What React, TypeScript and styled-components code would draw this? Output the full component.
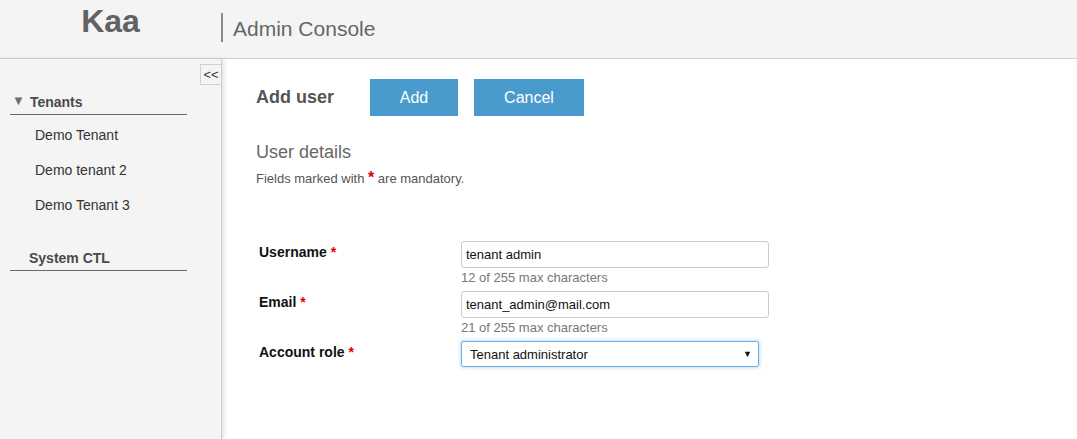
import React from "react";
import styled, { createGlobalStyle } from "styled-components";

const Global = createGlobalStyle`
  html, body { margin: 0; padding: 0; background: #fff; }
  body { font-family: "Liberation Sans", Arial, sans-serif; color: #333; }
  * { box-sizing: border-box; }
`;

const Page = styled.div`
  width: 1077px;
  height: 439px;
  display: flex;
  flex-direction: column;
  overflow: hidden;
`;

const Header = styled.header`
  height: 59px;
  background: #f4f4f4;
  border-bottom: 1px solid #d0d0d0;
  display: flex;
  align-items: center;
  flex-shrink: 0;
`;

const Logo = styled.div`
  width: 221px;
  text-align: center;
  font-size: 32px;
  font-weight: bold;
  color: #626262;
  margin-top: -16px;
`;

const Title = styled.div`
  border-left: 2px solid #8a8a8a;
  height: 29px;
  margin-top: -3px;
  padding-left: 10px;
  font-size: 21px;
  color: #666;
  display: flex;
  align-items: center;
  padding-top: 2px;
`;

const Body = styled.div`
  flex: 1;
  display: flex;
`;

const Sidebar = styled.nav`
  width: 222px;
  background: #f4f4f4;
  border-right: 1px solid #cfcfcf;
  box-shadow: 2px 0 4px rgba(0, 0, 0, 0.12);
  position: relative;
  padding: 33px 34px 0 10px;
  z-index: 1;
`;

const Collapse = styled.button`
  position: absolute;
  top: 5px;
  right: 0;
  width: 21px;
  height: 21px;
  border: 1px solid #cfcfcf;
  border-right: none;
  background: #f4f4f4;
  font-family: "Liberation Sans", Arial, sans-serif;
  font-size: 13px;
  color: #333;
  padding: 0;
  line-height: 19px;
`;

const SectionHead = styled.div<{ $indent: number }>`
  display: flex;
  align-items: center;
  gap: 5px;
  height: 20px;
  padding-left: ${(p) => p.$indent}px;
  border-bottom: 1px solid #6a6a6a;
  font-size: 14px;
  font-weight: bold;
  color: #4a4a4a;
  padding-bottom: 2px;
  box-sizing: content-box;
`;

const Arrow = styled.span`
  font-size: 13px;
  color: #6f6f6f;
  margin-top: -3px;
`;

const ItemList = styled.ul`
  list-style: none;
  margin: 0 0 25px;
  padding: 0;
`;

const Item = styled.li`
  padding-left: 25px;
  height: 35px;
  line-height: 35px;
  font-size: 14px;
  color: #333;
  &:first-child { margin-top: 3px; }
`;

const Main = styled.main`
  flex: 1;
  padding: 20px 0 0 34px;
`;

const Toolbar = styled.div`
  display: flex;
  align-items: center;
`;

const PageTitle = styled.h1`
  margin: 0 36px 0 0;
  font-size: 18px;
  font-weight: bold;
  color: #555;
`;

const Button = styled.button<{ $w: number }>`
  width: ${(p) => p.$w}px;
  height: 37px;
  background: #4a9bcd;
  border: none;
  color: #fff;
  font-family: "Liberation Sans", Arial, sans-serif;
  font-size: 16px;
  margin-right: 16px;
`;

const SubTitle = styled.h2`
  margin: 26px 0 0;
  font-size: 18px;
  font-weight: normal;
  color: #666;
`;

const Note = styled.p`
  margin: 6px 0 0;
  font-size: 13px;
  color: #555;
`;

const Star = styled.span<{ $size?: number }>`
  color: #d00;
  font-weight: bold;
  font-size: ${(p) => p.$size ?? 14}px;
`;

const Form = styled.div`
  margin-top: 54px;
  display: grid;
  grid-template-columns: 202px 308px;
  padding-left: 3px;
`;

const Label = styled.label`
  font-size: 14px;
  font-weight: bold;
  color: #111;
  padding-top: 3px;
  display: flex;
  gap: 4px;
`;

const Field = styled.div`
  display: flex;
  flex-direction: column;
  margin-bottom: 6px;
`;

const Input = styled.div`
  height: 27px;
  border: 1px solid #ccc;
  border-radius: 3px;
  padding: 0 4px;
  font-size: 13px;
  line-height: 25px;
  color: #111;
`;

const Hint = styled.div`
  font-size: 13px;
  color: #777;
  margin-top: 2px;
  line-height: 15px;
`;

const Select = styled.div`
  width: 298px;
  height: 26px;
  border: 1px solid #66afe9;
  border-radius: 2px;
  box-shadow: 0 0 4px rgba(102, 175, 233, 0.6);
  display: flex;
  align-items: center;
  justify-content: space-between;
  padding: 0 6px 0 8px;
  font-size: 13px;
  color: #111;
`;

const Caret = styled.span`
  font-size: 9px;
  color: #111;
`;

export default function App() {
  return (
    <Page>
      <Global />
      <Header>
        <Logo>Kaa</Logo>
        <Title>Admin Console</Title>
      </Header>
      <Body>
        <Sidebar>
          <Collapse>&lt;&lt;</Collapse>
          <SectionHead $indent={2}>
            <Arrow>▼</Arrow>
            Tenants
          </SectionHead>
          <ItemList>
            <Item>Demo Tenant</Item>
            <Item>Demo tenant 2</Item>
            <Item>Demo Tenant 3</Item>
          </ItemList>
          <SectionHead $indent={19}>System CTL</SectionHead>
        </Sidebar>
        <Main>
          <Toolbar>
            <PageTitle>Add user</PageTitle>
            <Button $w={88}>Add</Button>
            <Button $w={110}>Cancel</Button>
          </Toolbar>
          <SubTitle>User details</SubTitle>
          <Note>
            Fields marked with <Star $size={16}>*</Star> are mandatory.
          </Note>
          <Form>
            <Label>
              Username <Star>*</Star>
            </Label>
            <Field>
              <Input>tenant admin</Input>
              <Hint>12 of 255 max characters</Hint>
            </Field>
            <Label>
              Email <Star>*</Star>
            </Label>
            <Field>
              <Input>tenant_admin@mail.com</Input>
              <Hint>21 of 255 max characters</Hint>
            </Field>
            <Label>
              Account role <Star>*</Star>
            </Label>
            <Field>
              <Select>
                Tenant administrator
                <Caret>▼</Caret>
              </Select>
            </Field>
          </Form>
        </Main>
      </Body>
    </Page>
  );
}
